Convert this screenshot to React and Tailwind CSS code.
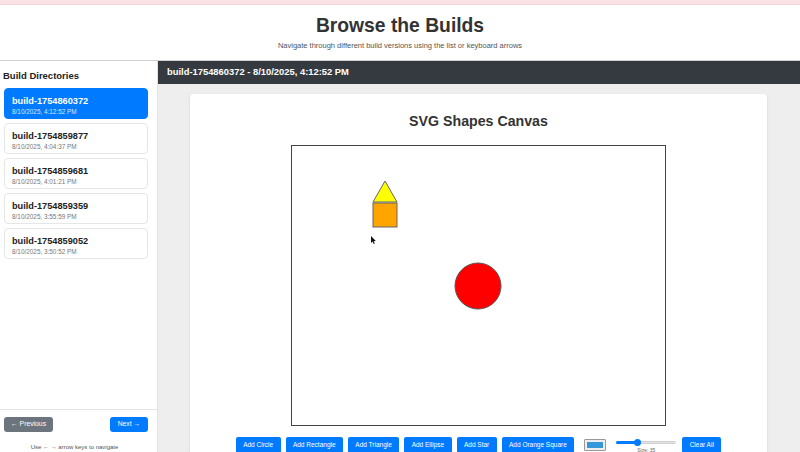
import React, { useState } from 'react';

const BUILDS = [
  { id: 'build-1754860372', date: '8/10/2025, 4:12:52 PM' },
  { id: 'build-1754859877', date: '8/10/2025, 4:04:37 PM' },
  { id: 'build-1754859681', date: '8/10/2025, 4:01:21 PM' },
  { id: 'build-1754859359', date: '8/10/2025, 3:55:59 PM' },
  { id: 'build-1754859052', date: '8/10/2025, 3:50:52 PM' },
];

const SHAPE_BUTTONS = ['Add Circle', 'Add Rectangle', 'Add Triangle', 'Add Ellipse', 'Add Star', 'Add Orange Square'];

function Sidebar({ selected, onSelect }) {
  return (
    <aside className="w-[158px] shrink-0 bg-white border-r border-[#e2e2e2] flex flex-col">
      <h2 className="pl-[3px] pt-[9px] mb-[6px] text-[9.5px] leading-[12px] font-bold text-[#222]">Build Directories</h2>

      {/* Build list */}
      <div className="flex flex-col gap-[4px] pl-[4px] flex-1">
        {BUILDS.map((b, i) => (
          <button
            key={b.id}
            onClick={() => onSelect(i)}
            className={`w-[144px] h-[31px] rounded-[4px] border text-left pl-[7px] pt-[4px] ${
              selected === i ? 'bg-[#007bff] border-[#007bff] text-white' : 'bg-white border-[#e6e6e6] text-[#222]'
            }`}
          >
            <div className="text-[9.2px] leading-[11px] font-bold">{b.id}</div>
            <div className={`text-[6.4px] leading-[9px] ${selected === i ? 'text-[#d8e8ff]' : 'text-[#777]'}`}>{b.date}</div>
          </button>
        ))}
      </div>

      {/* Prev / next */}
      <div className="border-t border-[#e6e6e6] pt-[7px] h-[43px]">
        <div className="flex justify-between pl-[4px] pr-[9px]">
          <button className="h-[15px] w-[49px] rounded-[3px] bg-[#6c757d] text-white text-[6.8px]">← Previous</button>
          <button className="h-[15px] w-[38px] rounded-[3px] bg-[#007bff] text-white text-[6.8px]">Next →</button>
        </div>
        <p className="mt-[11px] text-center pr-[8px] text-[6px] leading-[8px] text-[#555]">Use ← → arrow keys to navigate</p>
      </div>
    </aside>
  );
}

function ShapesCanvas() {
  const [size, setSize] = useState(35);
  return (
    <div className="ml-[32px] mr-[33px] mt-[10px] flex-1 bg-white rounded-t-[4px] shadow-sm flex flex-col items-center">
      <h1 className="mt-[19px] text-[14.2px] leading-[17px] font-bold text-[#333]">SVG Shapes Canvas</h1>

      <div className="mt-[15px] w-[375px] h-[281px] border border-[#444] bg-white">
        <svg width="373" height="279" viewBox="0 0 373 279">
          <polygon points="93,35 81,56 105,56" fill="#ffff00" stroke="#666" strokeWidth="1" />
          <rect x="81" y="57" width="24" height="24" fill="#ffa500" stroke="#666" strokeWidth="1" />
          <circle cx="186" cy="140" r="23" fill="#ff0000" stroke="#555" strokeWidth="1" />
          {/* mouse pointer */}
          <path d="M79 90 L79 97 L80.6 95.6 L81.8 98 L82.8 97.5 L81.7 95.2 L83.8 95 Z" fill="#111" />
        </svg>
      </div>

      <div className="mt-[11px] flex items-start">
        <div className="flex gap-[5px]">
          {SHAPE_BUTTONS.map((label) => (
            <button key={label} className="h-[16px] px-[7.4px] rounded-[2px] bg-[#007bff] text-white text-[6.5px]">
              {label}
            </button>
          ))}
        </div>
        <div className="ml-[10px] mt-[2px] w-[22px] h-[12px] border border-[#999] bg-[#eee] p-[2px] rounded-[1px]">
          <div className="w-full h-full bg-[#3498db]" />
        </div>
        <div className="ml-[10px] w-[60px] flex flex-col items-center">
          <div className="relative w-[60px] h-[9px] mt-[1px] flex items-center">
            <div className="h-[3px] w-full rounded-full bg-[#e4e4e4] border border-[#cfcfcf]" />
            <div className="absolute left-0 h-[3px] rounded-full bg-[#007bff]" style={{ width: `${size}%` }} />
            <div className="absolute w-[7px] h-[7px] rounded-full bg-[#007bff]" style={{ left: `calc(${size}% - 3px)` }} />
          </div>
          <span className="text-[5px] leading-[6px] text-[#666]">Size: {size}</span>
        </div>
        <button onClick={() => setSize(35)} className="ml-[6px] h-[16px] px-[7.4px] rounded-[2px] bg-[#007bff] text-white text-[6.5px]">
          Clear All
        </button>
      </div>
    </div>
  );
}

export default function App() {
  const [selected, setSelected] = useState(0);
  const build = BUILDS[selected];

  return (
    <div className="h-[452px] overflow-hidden flex flex-col bg-white" style={{ fontFamily: '"Liberation Sans", Arial, sans-serif' }}>
      <div className="h-[5px] shrink-0 bg-[#fde2e5] border-b border-[#f3d6d9]" />

      {/* Page header */}
      <header className="h-[56px] shrink-0 border-b border-[#cfcfcf] flex flex-col items-center">
        <h1 className="mt-[10px] text-[19.3px] leading-[22px] font-bold text-[#333]">Browse the Builds</h1>
        <p className="mt-[4px] text-[7.5px] leading-[10px] text-[#555]">
          Navigate through different build versions using the list or keyboard arrows
        </p>
      </header>

      <div className="flex flex-1 min-h-0">
        <Sidebar selected={selected} onSelect={setSelected} />

        <main className="flex-1 min-w-0 flex flex-col bg-[#eeeeee]">
          <div className="h-[23px] shrink-0 bg-[#343a40] flex items-center px-[9px] text-white text-[9.4px] font-bold">
            {build.id} - {build.date}
          </div>
          <ShapesCanvas />
        </main>
      </div>
    </div>
  );
}
